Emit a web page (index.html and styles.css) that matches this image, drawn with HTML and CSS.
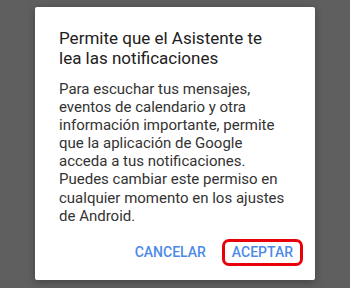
FILE: index.html
```html
<!DOCTYPE html>
<html lang="es">
<head>
  <meta charset="UTF-8" />
  <meta name="viewport" content="width=device-width, initial-scale=1.0"/>
  <title>Permiso de notificaciones</title>
  <link rel="stylesheet" href="styles.css">
</head>
<body>

  <div class="dialogo">
    <h2>Permite que el Asistente te lea las notificaciones</h2>
    <p>Para escuchar tus mensajes, eventos de calendario y otra información importante, permite que la aplicación de Google acceda a tus notificaciones. Puedes cambiar este permiso en cualquier momento en los ajustes de Android.</p>
    <div class="acciones">
      <button class="boton">CANCELAR</button>
      <button class="boton marcado">ACEPTAR</button>
    </div>
  </div>

</body>
</html>
```

FILE: styles.css
```css
body {
  font-family: Roboto, "Noto Sans", sans-serif;
  background-color: #5f5f5f;
  margin: 0;
  padding: 7px 35px 8px;
}

.dialogo {
  background: #fff;
  width: 280px;
  height: 273px;
  box-sizing: border-box;
  padding: 21px 30px 0 24px;
  border-radius: 2px;
  box-shadow: 0 2px 8px rgba(0,0,0,0.3);
}

.dialogo h2 {
  font-size: 17px;
  font-weight: 400;
  line-height: 20px;
  color: #212121;
  margin: 0 0 12px;
}

.dialogo p {
  font-size: 15px;
  line-height: 18.1px;
  color: #333;
  margin: 0;
}

.acciones {
  display: flex;
  justify-content: flex-end;
  gap: 6px;
  margin-top: 14px;
  margin-right: -18px;
}

.boton {
  font-family: Roboto, sans-serif;
  font-size: 14px;
  font-weight: 500;
  line-height: 16px;
  color: #4d8ae8;
  background: none;
  border: 3px solid transparent;
  border-radius: 7px;
  padding: 2.5px 7px;
  cursor: pointer;
}

.marcado {
  border-color: #e8000b;
}
```
